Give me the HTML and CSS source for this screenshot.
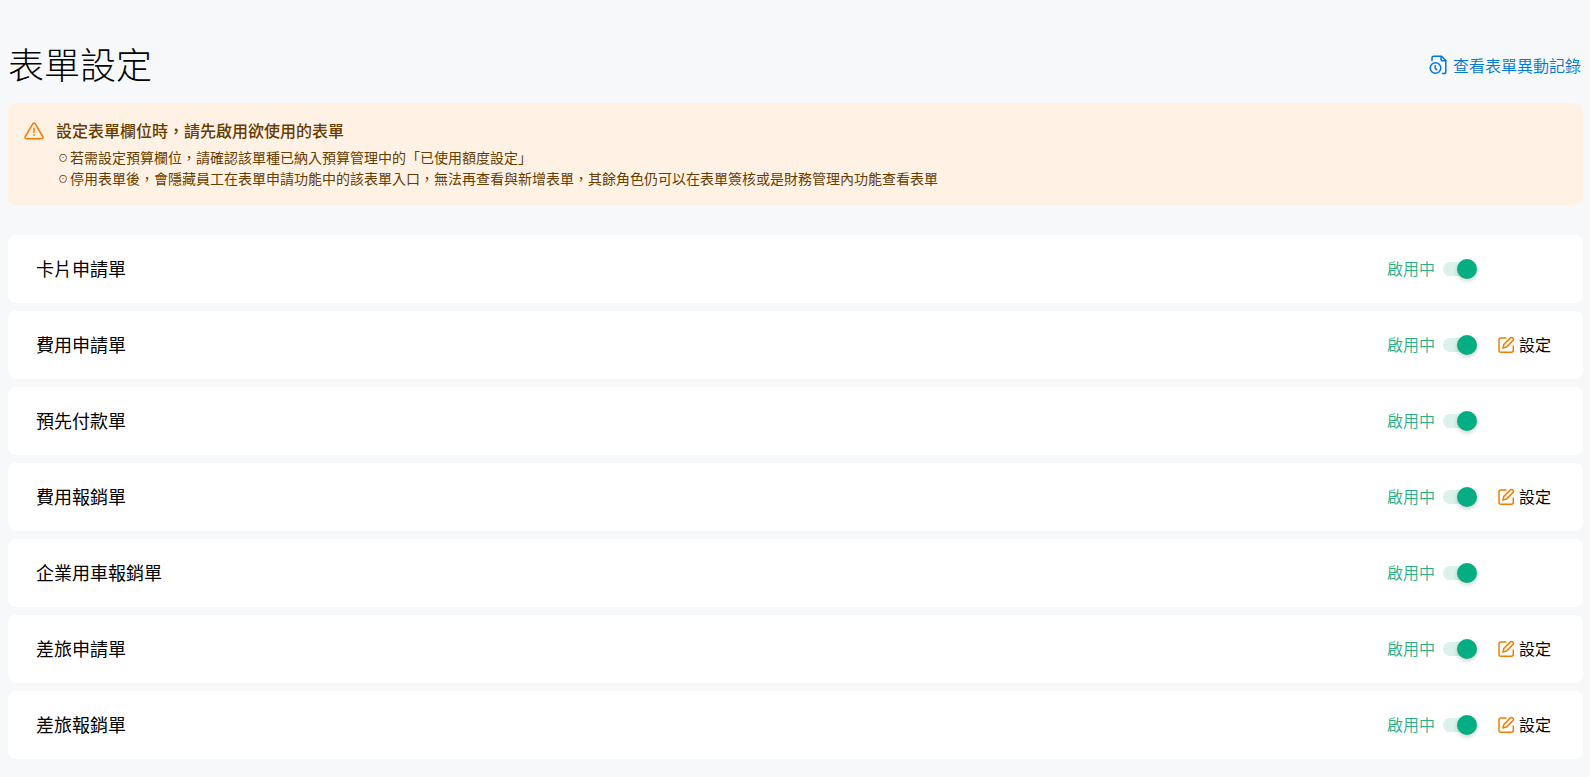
FILE: index.html
```html
<!DOCTYPE html>
<html lang="zh-Hant">
<head>
<meta charset="utf-8">
<meta name="viewport" content="width=device-width, initial-scale=1">
<title>表單設定</title>
<link rel="stylesheet" href="styles.css">
</head>
<body>
<svg class="sprite" aria-hidden="true">
  <symbol id="icon-edit" viewBox="0 0 18 18">
    <path d="M9 2H4A2 2 0 0 0 2 4v10.300a2 2 0 0 0 2 2h10.300a2 2 0 0 0 2-2V10"/>
    <path d="M6.800 8.500 13.400 1.900a1.600 1.600 0 0 1 2.300 0l.3.300a1.600 1.600 0 0 1 0 2.300L9.400 11.100l-3.500.9z"/>
  </symbol>
</svg>
<main class="page">
  <header class="page-header">
    <h1 class="page-title">表單設定</h1>
    <a class="history-link" href="#history">
      <svg class="icon history-icon" viewBox="0 0 18 20" aria-hidden="true">
        <path d="M3 5.500V3a1.800 1.800 0 0 1 1.800-1.800h7.700L16.800 5.500v11.300a1.800 1.800 0 0 1-1.800 1.800h-1.500"/>
        <path d="M12 1.500V4a1.800 1.800 0 0 0 1.800 1.800h2.700"/>
        <circle cx="6.500" cy="13" r="5.300"/>
        <path d="M6.200 10.700v2.500l1.600 1.500"/>
      </svg>
      <span>查看表單異動記錄</span>
    </a>
  </header>

  <section class="notice">
    <svg class="icon notice-icon" viewBox="0 0 20 18" aria-hidden="true">
      <path d="M8.700 1.800 1.300 14.500A1.500 1.500 0 0 0 2.600 16.800h14.800a1.500 1.500 0 0 0 1.300-2.300L11.300 1.800a1.500 1.500 0 0 0-2.600 0z"/>
      <path d="M10 6.300v4.200M10 12.800v.7"/>
    </svg>
    <div>
      <h2 class="notice-title">設定表單欄位時，請先啟用欲使用的表單</h2>
      <ul class="notice-list">
        <li><span class="bullet">⊙</span>若需設定預算欄位，請確認該單種已納入預算管理中的「已使用額度設定」</li>
        <li><span class="bullet">⊙</span>停用表單後，會隱藏員工在表單申請功能中的該表單入口，無法再查看與新增表單，其餘角色仍可以在表單簽核或是財務管理內功能查看表單</li>
      </ul>
    </div>
  </section>

  <ul class="form-list">
    <li class="form-row">
      <span class="form-name">卡片申請單</span>
      <label class="status"><span class="label">啟用中</span><input class="switch" type="checkbox" role="switch" checked></label>
      <div class="actions"></div>
    </li>
    <li class="form-row">
      <span class="form-name">費用申請單</span>
      <label class="status"><span class="label">啟用中</span><input class="switch" type="checkbox" role="switch" checked></label>
      <div class="actions"><button class="edit" type="button"><svg class="icon edit-icon" aria-hidden="true"><use href="#icon-edit"/></svg><span class="label">設定</span></button></div>
    </li>
    <li class="form-row">
      <span class="form-name">預先付款單</span>
      <label class="status"><span class="label">啟用中</span><input class="switch" type="checkbox" role="switch" checked></label>
      <div class="actions"></div>
    </li>
    <li class="form-row">
      <span class="form-name">費用報銷單</span>
      <label class="status"><span class="label">啟用中</span><input class="switch" type="checkbox" role="switch" checked></label>
      <div class="actions"><button class="edit" type="button"><svg class="icon edit-icon" aria-hidden="true"><use href="#icon-edit"/></svg><span class="label">設定</span></button></div>
    </li>
    <li class="form-row">
      <span class="form-name">企業用車報銷單</span>
      <label class="status"><span class="label">啟用中</span><input class="switch" type="checkbox" role="switch" checked></label>
      <div class="actions"></div>
    </li>
    <li class="form-row">
      <span class="form-name">差旅申請單</span>
      <label class="status"><span class="label">啟用中</span><input class="switch" type="checkbox" role="switch" checked></label>
      <div class="actions"><button class="edit" type="button"><svg class="icon edit-icon" aria-hidden="true"><use href="#icon-edit"/></svg><span class="label">設定</span></button></div>
    </li>
    <li class="form-row">
      <span class="form-name">差旅報銷單</span>
      <label class="status"><span class="label">啟用中</span><input class="switch" type="checkbox" role="switch" checked></label>
      <div class="actions"><button class="edit" type="button"><svg class="icon edit-icon" aria-hidden="true"><use href="#icon-edit"/></svg><span class="label">設定</span></button></div>
    </li>
  </ul>
</main>
</body>
</html>
```

FILE: styles.css
```css
* {
  box-sizing: border-box;
}

body {
  margin: 0;
  background: #f7f8fa;
  color: #000;
  font-family: "Noto Sans CJK TC", sans-serif;
  font-size: 16px;
  line-height: 24px;
}

ul, h1, h2 {
  margin: 0;
  padding: 0;
  list-style: none;
}

.sprite {
  display: none;
}

.icon {
  flex: none;
  fill: none;
  stroke: currentColor;
  stroke-width: 1.5;
  stroke-linecap: round;
  stroke-linejoin: round;
}

.page {
  padding: 38px 7px 18px 8px;
}

.page-header {
  display: flex;
  align-items: center;
  justify-content: space-between;
  padding-right: 2px;
  margin-bottom: 15px;
}

.page-title {
  font-size: 36px;
  font-weight: 300;
  line-height: 50px;
}

.history-link {
  display: flex;
  align-items: center;
  gap: 6px;
  padding-top: 4px;
  color: #0078d7;
  font-weight: 350;
  text-decoration: none;
}

.history-icon {
  width: 18px;
  height: 20px;
}

.notice {
  display: flex;
  gap: 12px;
  padding: 15px 16px 16px;
  margin-bottom: 30px;
  border-radius: 8px;
  background: #fff2e5;
  color: #663c00;
}

.notice-icon {
  width: 20px;
  height: 18px;
  margin-top: 4px;
  color: #f57c00;
}

.notice-title {
  font-size: 16px;
  font-weight: 500;
  line-height: 24px;
}

.notice-list {
  padding-top: 5px;
  font-size: 14px;
  line-height: 21px;
}

.bullet {
  display: inline-block;
  width: 14px;
  font-size: 10px;
  line-height: 16px;
  text-align: center;
  vertical-align: 1px;
}

.form-list {
  display: grid;
  gap: 8px;
}

.form-row {
  display: flex;
  align-items: center;
  min-height: 68px;
  padding: 0 32px 0 28px;
  border-radius: 8px;
  background: #fff;
}

.form-name {
  flex: 1;
  padding-bottom: 2px;
  font-size: 18px;
}

.label {
  padding-bottom: 2px;
}

.status {
  display: flex;
  align-items: center;
  gap: 8px;
  color: #29b085;
  font-weight: 350;
}

.switch {
  position: relative;
  width: 34px;
  height: 14px;
  margin: 0;
  border-radius: 7px;
  background: #daf2eb;
  appearance: none;
}

.switch::before {
  content: "";
  position: absolute;
  top: -3px;
  right: 0;
  width: 20px;
  height: 20px;
  border-radius: 50%;
  background: #05ae82;
  box-shadow: 0 2px 4px rgba(0, 35, 11, 0.2);
}

.switch:not(:checked)::before {
  right: auto;
  left: 0;
}

.actions {
  width: 74px;
}

.edit {
  display: flex;
  align-items: center;
  gap: 4px;
  margin-left: auto;
  padding: 0;
  border: 0;
  background: none;
  color: #000;
  font: inherit;
}

.edit-icon {
  width: 18px;
  height: 18px;
  color: #f57c00;
}
```
